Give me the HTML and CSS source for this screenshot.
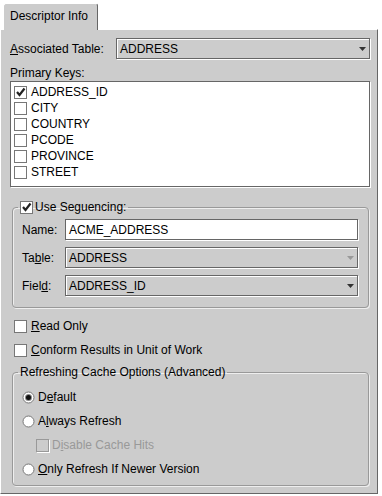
FILE: index.html
```html
<!DOCTYPE html>
<html>
<head>
<meta charset="utf-8">
<title>Descriptor Info</title>
<link rel="stylesheet" href="styles.css">
</head>
<body>
<div class="tabstrip">
  <div class="tab">Descriptor Info</div>
</div>
<div class="panel">
  <div class="row">
    <label class="row-label"><u>A</u>ssociated Table:</label>
    <div class="combo"><span>ADDRESS</span><svg class="arrow" width="7" height="4" viewBox="0 0 7 4"><polygon points="0,0 7,0 3.5,4" fill="#333"/></svg></div>
  </div>
  <div class="caption">Primary Keys:</div>
  <div class="list">
    <div class="item"><span class="cb"><svg width="11" height="11" viewBox="0 0 11 11"><path d="M2 5 L4.5 8 L9.5 1.5" fill="none" stroke="#222" stroke-width="2.2"/></svg></span>ADDRESS_ID</div>
    <div class="item"><span class="cb"></span>CITY</div>
    <div class="item"><span class="cb"></span>COUNTRY</div>
    <div class="item"><span class="cb"></span>PCODE</div>
    <div class="item"><span class="cb"></span>PROVINCE</div>
    <div class="item"><span class="cb"></span>STREET</div>
  </div>
  <fieldset class="group seq">
    <legend class="legend"><span class="cb"><svg width="11" height="11" viewBox="0 0 11 11"><path d="M2 5 L4.5 8 L9.5 1.5" fill="none" stroke="#222" stroke-width="2.2"/></svg></span>Use Seguencing:</legend>
    <div class="gbody">
      <div class="frow"><label class="flabel">Name:</label><div class="field text">ACME_ADDRESS</div></div>
      <div class="frow"><label class="flabel">Ta<u>b</u>le:</label><div class="field combo"><span>ADDRESS</span><svg class="arrow" width="7" height="4" viewBox="0 0 7 4"><polygon points="0,0 7,0 3.5,4" fill="#999"/></svg></div></div>
      <div class="frow"><label class="flabel">Fiel<u>d</u>:</label><div class="field combo"><span>ADDRESS_ID</span><svg class="arrow" width="7" height="4" viewBox="0 0 7 4"><polygon points="0,0 7,0 3.5,4" fill="#333"/></svg></div></div>
    </div>
  </fieldset>
  <div class="check-row ro"><span class="cb"></span><span><u>R</u>ead Only</span></div>
  <div class="check-row conform"><span class="cb"></span><span><u>C</u>onform Results in Unit of Work</span></div>
  <fieldset class="group refresh">
    <legend class="legend plain">Refreshing Cache Options (Advanced)</legend>
    <div class="rbody">
      <div class="radio-row"><svg class="radio" width="13" height="13" viewBox="0 0 13 13"><circle cx="6.5" cy="6.5" r="5.5" fill="#fff" stroke="#777"/><circle cx="6.5" cy="6.5" r="3.5" fill="#888"/><circle cx="6.5" cy="6.5" r="2.5" fill="#111"/></svg><span>D<u>e</u>fault</span></div>
      <div class="radio-row"><svg class="radio" width="13" height="13" viewBox="0 0 13 13"><circle cx="6.5" cy="6.5" r="5.5" fill="#fff" stroke="#777"/></svg><span>A<u>l</u>ways Refresh</span></div>
      <div class="radio-row sub disabled"><span class="cb dis"></span><span>D<u>i</u>sable Cache Hits</span></div>
      <div class="radio-row"><svg class="radio" width="13" height="13" viewBox="0 0 13 13"><circle cx="6.5" cy="6.5" r="5.5" fill="#fff" stroke="#777"/></svg><span><u>O</u>nly Refresh If Newer Version</span></div>
    </div>
  </fieldset>
</div>
</body>
</html>
```
FILE: styles.css
```css
* {
  box-sizing: border-box;
}

body {
  margin: 0;
  width: 382px;
  height: 496px;
  overflow: hidden;
  background: #fff;
  font: 12px/14px "Liberation Sans", Arial, sans-serif;
  color: #000;
}

.tabstrip {
  height: 29px;
  padding: 3px 0 0 3px;
  display: flex;
  align-items: flex-start;
}

.tab {
  position: relative;
  z-index: 1;
  width: 95px;
  height: 27px;
  background: #ccc;
  border-left: 1px solid #fff;
  border-top: 1px solid #fff;
  border-right: 1px solid #666;
  border-radius: 3px 3px 0 0;
  padding: 5px 0 0 6px;
}

.panel {
  width: 378px;
  height: 465px;
  background: #ccc;
  border-left: 1px solid #fff;
  border-top: 1px solid #fff;
  border-right: 1px solid #666;
  border-bottom: 1px solid #666;
  padding: 8px 7px 0 9px;
}

.row {
  display: flex;
  align-items: center;
  height: 21px;
}

.row-label {
  width: 106px;
  flex: none;
}

.combo,
.text {
  flex: 1;
  height: 21px;
  border: 1px solid #666;
  box-shadow: inset 1px 1px 0 #fff, 1px 1px 0 #fff;
  display: flex;
  align-items: center;
  justify-content: space-between;
  padding: 0 3px 0 3px;
}

.text {
  background: #fff;
  box-shadow: 1px 1px 0 #fff;
}

.arrow {
  flex: none;
  display: block;
}

.caption {
  margin-top: 7px;
}

.list {
  margin-top: 1px;
  height: 106px;
  background: #fff;
  border: 1px solid #666;
  box-shadow: 1px 1px 0 #fff;
  padding: 2px 0 0 3px;
}

.item {
  height: 16px;
  display: flex;
  align-items: center;
  gap: 4px;
}

.cb {
  width: 13px;
  height: 13px;
  flex: none;
  border: 1px solid #777;
  background: #fff;
  display: flex;
  align-items: center;
  justify-content: center;
}

.cb.dis {
  background: #ccc;
  border-color: #999;
  box-shadow: 1px 1px 0 #fff;
}

.group {
  margin: 13px 1px 0 2px;
  padding: 0;
  min-width: 0;
  border: 1px solid #999;
  border-radius: 4px;
  box-shadow: inset 1px 1px 0 #eee, 1px 1px 0 #eee;
}

.legend {
  margin-left: 5px;
  padding: 0 2px;
  height: 14px;
  display: flex;
  align-items: center;
  gap: 2px;
}

.gbody {
  padding: 5px 10px 11px 9px;
  display: flex;
  flex-direction: column;
  gap: 7px;
}

.frow {
  display: flex;
  align-items: center;
  height: 21px;
}

.flabel {
  width: 43px;
  flex: none;
}

.check-row {
  display: flex;
  align-items: center;
  gap: 4px;
  height: 16px;
  padding-left: 4px;
}

.ro {
  margin-top: 10px;
}

.conform {
  margin-top: 8px;
}

.refresh {
  margin-top: 7px;
}

.rbody {
  padding: 10px 0 8px 9px;
  display: flex;
  flex-direction: column;
  gap: 8px;
}

.radio-row {
  display: flex;
  align-items: center;
  gap: 3px;
  height: 16px;
}

.radio {
  flex: none;
  display: block;
}

.sub {
  padding-left: 14px;
}

.disabled {
  color: #999;
}
```
